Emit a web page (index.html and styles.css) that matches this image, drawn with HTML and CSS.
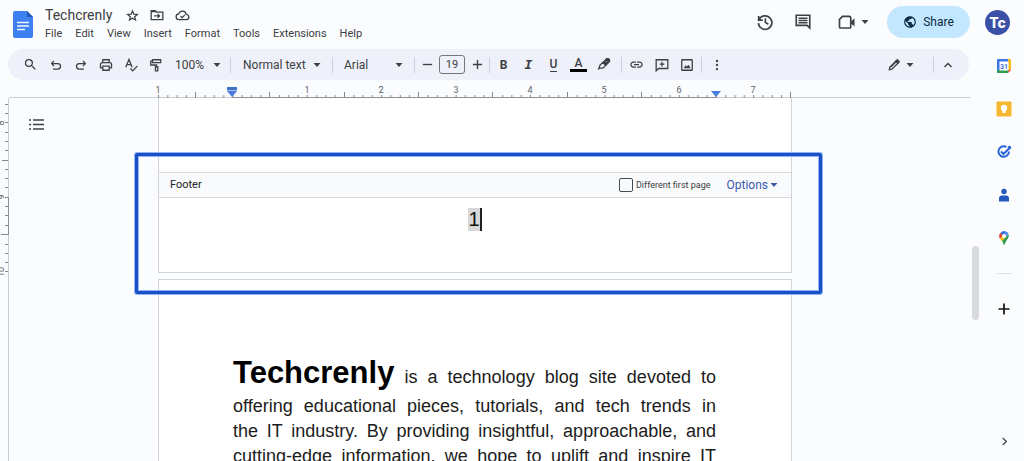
FILE: index.html
```html
<!DOCTYPE html>
<html lang="en">
<head>
<meta charset="utf-8">
<title>Techcrenly</title>
<link rel="stylesheet" href="styles.css">
</head>
<body>
<svg class="defs" aria-hidden="true">
  <symbol id="caret" viewBox="0 0 8 8"><path d="M0.5 2h7L4 6z" fill="currentColor"/></symbol>
</svg>

<header class="header">
  <a class="logo" href="#" aria-label="Docs home">
    <svg width="20" height="27" viewBox="0 0 20 27"><path d="M2 0h12l6 6v19a2 2 0 0 1-2 2H2a2 2 0 0 1-2-2V2a2 2 0 0 1 2-2z" fill="#3d80f2"/><path d="M14 0l6 6h-6z" fill="#2158b8"/><path d="M4 11.500h12M4 15h12M4 18.500h8" stroke="#f4f8ff" stroke-width="1.600"/></svg>
  </a>
  <div class="heading">
    <div class="title-row">
      <h1 class="title">Techcrenly</h1>
      <button class="mini" aria-label="Star"><svg class="line" width="13" height="13" viewBox="0 0 24 24"><path d="M12 3.500l2.500 6 6.500.5-5 4.200 1.600 6.300-5.600-3.400-5.600 3.400L8 14.200 3 10l6.500-.5z"/></svg></button>
      <button class="mini" aria-label="Move"><svg class="line" width="14" height="14" viewBox="0 0 24 24"><path d="M2 4.500h7l2 2.500h11v13H2z"/><path d="M2 6h8M7 13.500h9M13 10l3.500 3.500L13 17"/></svg></button>
      <button class="mini" aria-label="Saved to Drive"><svg class="line" width="15" height="14" viewBox="0 0 24 24"><path d="M6.500 20a5 5 0 0 1-.8-10A6.500 6.500 0 0 1 18.300 11 4.500 4.500 0 0 1 18.500 20z"/><path d="M8.500 14l2.700 2.700 4.800-5"/></svg></button>
    </div>
    <nav class="menu" aria-label="Menu">
      <button>File</button><button>Edit</button><button>View</button><button>Insert</button><button>Format</button><button>Tools</button><button>Extensions</button><button>Help</button>
    </nav>
  </div>
  <div class="actions">
    <button class="action" aria-label="Version history"><svg class="line" width="18" height="18" viewBox="0 0 24 24"><path d="M3.500 4v5.500H9M4 9a9 9 0 1 1-.8 4.500M12.500 7v5.500l4 2.500"/></svg></button>
    <button class="action" aria-label="Comments"><svg class="line" width="18" height="18" viewBox="0 0 24 24"><path d="M3 3h18v17l-3.500-3.500H3z"/><path d="M6 7h12M6 10h12M6 13h12" stroke-width="1.800"/></svg></button>
    <button class="action call" aria-label="Join a call"><svg class="line" width="18" height="18" viewBox="0 0 24 24"><path d="M6 4.500h9a2 2 0 0 1 2 2v12a1.500 1.500 0 0 1-1.500 1.500h-12A1.500 1.500 0 0 1 2 18.500V8.500z"/><path d="M17 11.500l5-4.500v11l-5-4.500z" fill="currentColor" stroke="none"/></svg><svg width="8" height="8"><use href="#caret"/></svg></button>
    <button class="share"><svg width="14" height="14" viewBox="0 0 24 24"><path fill="currentColor" d="M12 2C6.480 2 2 6.480 2 12s4.480 10 10 10 10-4.480 10-10S17.520 2 12 2zm-1 17.930c-3.950-.49-7-3.850-7-7.930 0-.62.08-1.210.21-1.790L9 15v1c0 1.100.9 2 2 2v1.930zm6.900-2.540c-.26-.81-1-1.390-1.900-1.390h-1v-3c0-.55-.45-1-1-1H8v-2h2c.55 0 1-.45 1-1V7h2c1.100 0 2-.9 2-2v-.41c2.930 1.190 5 4.060 5 7.410 0 2.080-.8 3.970-2.100 5.390z"/></svg>Share</button>
    <button class="avatar" aria-label="Account">Tc</button>
  </div>
</header>

<div class="work">
  <main class="editor">
    <div class="toolbar" role="toolbar" aria-label="Formatting">
      <button class="tool" aria-label="Search"><svg width="15" height="15" viewBox="0 0 24 24"><path fill="currentColor" d="M15.500 14h-.79l-.28-.27A6.470 6.470 0 0 0 16 9.500 6.500 6.500 0 1 0 9.500 16c1.610 0 3.090-.59 4.230-1.570l.27.28v.79l5 4.990L20.490 19l-4.990-5zm-6 0C7.010 14 5 11.990 5 9.500S7.010 5 9.500 5 14 7.010 14 9.500 11.990 14 9.500 14z"/></svg></button>
      <button class="tool" aria-label="Undo"><svg class="line" width="14" height="14" viewBox="0 0 24 24"><path d="M8.500 5l-4 4.500 4 4.500M5 9.500h10a4.700 4.700 0 0 1 0 9.500H7"/></svg></button>
      <button class="tool" aria-label="Redo"><svg class="line" width="14" height="14" viewBox="0 0 24 24"><path d="M15.500 5l4 4.500-4 4.500M19 9.500H9a4.700 4.700 0 0 0 0 9.500h8"/></svg></button>
      <button class="tool" aria-label="Print"><svg class="line" width="14" height="14" viewBox="0 0 24 24"><path d="M6.500 8V3h11v5M6.500 17H2.500v-6a3 3 0 0 1 3-3h13a3 3 0 0 1 3 3v6h-4M6.500 14h11v7h-11z"/></svg></button>
      <button class="tool" aria-label="Spelling"><svg class="line" width="14" height="14" viewBox="0 0 24 24"><path d="M3 16L8.500 2.500 14 16M5 11.500h7M11 18l4 4 8-8.500"/></svg></button>
      <button class="tool" aria-label="Paint format"><svg class="line" width="14" height="14" viewBox="0 0 24 24"><path d="M6 3h14v5H6zM6 5.500H3v6.500h10v3M11 15h4v7h-4z"/></svg></button>
      <label class="picker zoom"><select aria-label="Zoom"><option>100%</option></select><svg width="8" height="8"><use href="#caret"/></svg></label>
      <span class="sep"></span>
      <label class="picker style"><select aria-label="Styles"><option>Normal text</option></select><svg width="8" height="8"><use href="#caret"/></svg></label>
      <span class="sep"></span>
      <label class="picker font"><select aria-label="Font"><option>Arial</option></select><svg width="8" height="8"><use href="#caret"/></svg></label>
      <span class="sep"></span>
      <button class="step" aria-label="Decrease font size"><svg class="line" width="11" height="11" viewBox="0 0 24 24"><path d="M2 12h20" stroke-width="3"/></svg></button>
      <input class="size" aria-label="Font size" value="19">
      <button class="step" aria-label="Increase font size"><svg class="line" width="11" height="11" viewBox="0 0 24 24"><path d="M2 12h20M12 2v20" stroke-width="3"/></svg></button>
      <span class="sep"></span>
      <div class="group first-group">
        <button class="tool bold" aria-label="Bold">B</button>
        <button class="tool italic" aria-label="Italic">I</button>
        <button class="tool under" aria-label="Underline"><span>U</span></button>
        <button class="tool color" aria-label="Text color"><span>A</span></button>
        <button class="tool" aria-label="Highlight color"><svg class="line" width="14" height="16" viewBox="0 0 24 27"><path d="M5 14l5-5 5 5-5 5H5l-2 1z"/><path d="M10.500 9l6-6.500h3l2 2v3L15 14z" fill="currentColor"/><path d="M15.500 7l1.500 1.500" stroke="#eef1fa" stroke-width="1.500"/></svg></button>
      </div>
      <span class="sep"></span>
      <div class="group">
        <button class="tool" aria-label="Insert link"><svg width="15" height="15" viewBox="0 0 24 24"><path fill="currentColor" d="M4 12c0-1.710 1.300-3 3-3h4V7H7c-2.760 0-5 2.240-5 5s2.240 5 5 5h4v-2H7c-1.700 0-3-1.300-3-3zM8 13h8v-2H8v2zm9-6h-4v2h4c1.700 0 3 1.300 3 3s-1.300 3-3 3h-4v2h4c2.760 0 5-2.240 5-5s-2.240-5-5-5z"/></svg></button>
        <button class="tool" aria-label="Add comment"><svg class="line" width="14" height="14" viewBox="0 0 24 24"><path d="M2 3h20v15H6l-4 4zM12 6.500v8M8 10.500h8"/></svg></button>
        <button class="tool" aria-label="Insert image"><svg class="line" width="14" height="14" viewBox="0 0 24 24"><rect x="3" y="3" width="18" height="18" rx="1"/><path d="M7 17l3-4 2 2.500 2.500-3.500 3 5z" fill="currentColor" stroke-width="1"/></svg></button>
      </div>
      <span class="sep"></span>
      <div class="group">
        <button class="tool" aria-label="More"><svg width="14" height="14" viewBox="0 0 24 24" fill="currentColor"><circle cx="12" cy="5" r="2"/><circle cx="12" cy="12" r="2"/><circle cx="12" cy="19" r="2"/></svg></button>
      </div>
      <button class="mode" aria-label="Editing mode"><svg class="line" width="14" height="14" viewBox="0 0 24 24"><path d="M4 20l1-4.500L16 4.500 19.500 8 8.500 19z"/><path d="M15 5.500L17.500 3 21 6.500 18.500 9zM6 16L15.500 6.500" fill="currentColor"/></svg><svg width="8" height="8"><use href="#caret"/></svg></button>
      <span class="sep"></span>
      <button class="tool hide" aria-label="Hide the menus"><svg class="line" width="12" height="12" viewBox="0 0 24 24"><path d="M5 16l7-7 7 7" stroke-width="2.800"/></svg></button>
    </div>

    <div class="ruler">
      <svg class="ruler-scale" height="18" aria-label="Horizontal ruler">
        <defs>
          <pattern id="inch" width="74.400" height="18" patternUnits="userSpaceOnUse">
            <path d="M.5 15v3M9.800 15v3M19.100 15v3M28.400 15v3M47 15v3M56.300 15v3M65.600 15v3" stroke="#85888c"/>
          </pattern>
        </defs>
        <rect width="634" height="18" fill="url(#inch)"/>
        <path d="M37.500 12v6M111.500 12v6M186.500 12v6M260.500 12v6M334.500 12v6M409.500 12v6M483.500 12v6M558.500 15v3M632.500 12v6" stroke="#85888c"/>
        <path d="M74 17.500h484" stroke="#8d9094"/>
        <g font-size="9" text-anchor="middle" fill="#5f6368"><text x="0" y="13">1</text><text x="149" y="13">1</text><text x="223" y="13">2</text><text x="298" y="13">3</text><text x="372" y="13">4</text><text x="446" y="13">5</text><text x="521" y="13">6</text><text x="595" y="13">7</text></g>
        <path d="M69 7h10v3H69z" fill="#3f72c9"/><path d="M69 10h10v1H69z" fill="#a9c3f0"/><path d="M69 11h10l-5 6z" fill="#4a7ddb"/><path d="M553 11h10l-5 6z" fill="#4a7ddb"/>
      </svg>
    </div>

    <div class="canvas">
      <svg class="vruler" width="9" height="363" aria-label="Vertical ruler">
        <path d="M8.500 0v363" stroke="#c9ccd0"/><path d="M8.500 99v38" stroke="#8d9094"/>
        <path d="M5 6.500h3M5 15.500h3M5 24.500h3M5 34.500h3M5 43.500h3M5 52.500h3M2 62.500h6M5 71.500h3M5 80.500h3M5 89.500h3M5 99.500h3M5 108.500h3M5 117.500h3M5 127.500h3M1 136.500h7M5 146.500h3M5 155.500h3M5 164.500h3M5 173.500h3" stroke="#85888c"/>
        <g font-size="9" text-anchor="middle" fill="#5f6368"><text transform="translate(4 25) rotate(-90)">8</text><text transform="translate(4 99) rotate(-90)">9</text><text transform="translate(4 174) rotate(-90)">10</text></g>
      </svg>
      <aside class="outline"><button class="mini" aria-label="Show outline"><svg width="15" height="13" viewBox="0 0 15 13"><path d="M0 2h2M4 2h11M0 6.500h2M4 6.500h11M0 11h2M4 11h11" stroke="currentColor" stroke-width="1.600"/></svg></button></aside>
      <div class="pages">
        <section class="page page-end">
          <div class="footer-bar">
            <span class="footer-name">Footer</span>
            <label class="first"><input type="checkbox">Different first page</label>
            <button class="options">Options<svg width="8" height="8"><use href="#caret"/></svg></button>
          </div>
          <p class="footer-text"><span class="field">1</span></p>
        </section>
        <article class="page page-next">
          <p class="body-text"><strong>Techcrenly</strong> is a technology blog site devoted to offering educational pieces, tutorials, and tech trends in<br>the IT industry. By providing insightful, approachable, and cutting-edge information, we hope to uplift and inspire IT</p>
        </article>
        <div class="highlight"></div>
      </div>
    </div>
  </main>

  <div class="scroll"><div class="thumb"></div></div>

  <aside class="rail" aria-label="Side panel">
    <button aria-label="Calendar"><svg width="16" height="16" viewBox="0 0 16 16"><path d="M2 1h11v3H4v11H2a1 1 0 0 1-1-1V2a1 1 0 0 1 1-1z" fill="#3b78e7"/><path d="M12 1h2a1 1 0 0 1 1 1v10h-3z" fill="#f5b921"/><path d="M1 12h11v3H2a1 1 0 0 1-1-1z" fill="#2f9d50"/><path d="M12 12h3l-3 3z" fill="#e5483a"/><path d="M3.500 3.500h9v9h-9z" fill="#fff"/><text x="8" y="10.500" font-size="7" font-weight="700" text-anchor="middle" fill="#3b78e7">31</text></svg></button>
    <button aria-label="Keep"><svg width="16" height="16" viewBox="0 0 16 16"><rect x=".5" y=".5" width="15" height="15" rx="1" fill="#f6b82f"/><circle cx="8" cy="7" r="3.200" fill="#fff"/><path d="M6.500 9h3v3h-3z" fill="#fff"/></svg></button>
    <button aria-label="Tasks"><svg width="16" height="16" viewBox="0 0 16 16" fill="none" stroke="#2b66d9" stroke-width="2"><path d="M10.500 3A5.300 5.300 0 1 0 13 7.500M5 7.500l2.500 2.500L14 3.500"/><circle cx="13.500" cy="3.500" r=".8"/></svg></button>
    <button aria-label="Contacts"><svg width="16" height="16" viewBox="0 0 16 16" fill="#2358bd"><circle cx="8" cy="4.500" r="2.700"/><path d="M3 14.500v-3a3 3 0 0 1 3-3h4a3 3 0 0 1 3 3v3z"/></svg></button>
    <button aria-label="Maps"><svg width="16" height="16" viewBox="0 0 16 16"><path d="M8 7L4.400 3A4.900 4.900 0 0 1 9.500 1.300z" fill="#3271d8"/><path d="M9.500 1.300A5 5 0 0 1 12.500 4L8 8z" fill="#4e8cf0"/><path d="M4.400 3A5 5 0 0 0 3.700 8.500L8 6z" fill="#dd4437"/><path d="M3.700 8.500L6 11.500 10 7 7 5.500z" fill="#f6b921"/><path d="M12.500 4c1.400 4-2.500 5.500-3.700 10.500H7.500C7.300 13 6.700 12 6 11.300z" fill="#2f9d50"/><circle cx="8" cy="6" r="1.900" fill="#fff"/></svg></button>
    <hr>
    <button aria-label="Get add-ons"><svg width="16" height="16" viewBox="0 0 16 16"><path d="M2.500 8h11M8 2.500v11" stroke="#111" stroke-width="1.700"/></svg></button>
    <button class="collapse" aria-label="Hide side panel"><svg class="line" width="11" height="11" viewBox="0 0 24 24"><path d="M8 4l8 8-8 8" stroke-width="2.800"/></svg></button>
  </aside>
</div>
</body>
</html>
```

FILE: styles.css
```css
* { box-sizing: border-box; }

body {
  margin: 0;
  height: 100vh;
  display: flex;
  flex-direction: column;
  overflow: hidden;
  background: #fbfcfe;
  color: #3c4043;
  font: 12px/16px Roboto, "Liberation Sans", sans-serif;
}

button, select, input { font: inherit; color: inherit; }

button {
  display: flex;
  align-items: center;
  justify-content: center;
  padding: 0;
  border: 0;
  background: none;
  cursor: pointer;
}

svg { display: block; flex: none; }
.defs { position: absolute; width: 0; height: 0; }
.line { fill: none; stroke: currentColor; stroke-width: 2.2; }

/* Header */
.header {
  flex: none;
  display: flex;
  align-items: flex-start;
  height: 49px;
  padding: 6px 14px 0 13px;
}
.logo { margin-top: 5px; }
.heading { margin-left: 12px; }
.title-row { display: flex; align-items: center; gap: 11px; height: 18px; }
.title { margin: 0 3px 0 0; font-size: 14px; font-weight: 400; line-height: 18px; }
.menu { display: flex; gap: 13px; height: 20px; font-size: 11px; }
.menu button { line-height: 20px; }
.actions { display: flex; align-items: center; height: 32px; margin-left: auto; }
.action { width: 38px; height: 32px; }
.call { width: 56px; gap: 5px; margin-right: 9px; padding-left: 6px; }
.share {
  gap: 6px;
  width: 83px;
  height: 32px;
  margin-right: 15px;
  border-radius: 16px;
  background: #c2e7ff;
  color: #0b2a42;
  font-size: 12px;
}
.avatar {
  width: 25px;
  height: 25px;
  border-radius: 50%;
  background: #3a4fa6;
  color: #fff;
  font: 800 14px/25px Inter, sans-serif;
}

/* Work area */
.work { flex: 1; display: flex; min-height: 0; }
.editor { flex: 1; display: flex; flex-direction: column; min-width: 0; }

.toolbar {
  flex: none;
  display: flex;
  align-items: center;
  height: 31px;
  margin: 0 1px 0 8px;
  padding: 0 7px 0 10px;
  border-radius: 16px;
  background: #eef1fa;
}
.tool { width: 25px; height: 24px; }
.step { width: 24px; height: 24px; }
.sep { width: 1px; height: 16px; background: #cdd1d9; }
.group { display: flex; padding: 0 2px; }
.first-group { padding: 0 5px 0 1px; }
.picker { display: grid; align-items: center; }
.picker > * { grid-area: 1 / 1; }
.picker select {
  width: 100%;
  padding: 0;
  border: 0;
  background: none;
  appearance: none;
}
.picker svg { justify-self: end; pointer-events: none; }
.zoom { width: 62px; padding: 0 9px 0 7px; }
.style { width: 101px; padding: 0 11px 0 12px; }
.font { width: 81px; padding: 0 11px; }
.size {
  width: 26px;
  height: 19px;
  padding: 0;
  border: 1px solid #74777a;
  border-radius: 3px;
  background: none;
  text-align: center;
  font-size: 11px;
}
.bold { font-weight: 700; }
.italic { font: italic 700 13px/16px "DejaVu Sans Mono", monospace; }
.under { font-weight: 500; }
.under span { line-height: 13px; border-bottom: 1px solid #3c4043; }
.color { font-weight: 500; }
.color span { width: 17px; line-height: 12px; border-bottom: 3px solid #000; }
.mode { gap: 5px; height: 24px; margin: 0 19px 0 auto; }
.hide { width: 28px; }

/* Rulers and pages share one set of columns */
.ruler, .canvas {
  display: grid;
  grid-template-columns: 9px 149fr minmax(0, 634px) 178fr;
}
.ruler {
  flex: none;
  height: 18px;
  background: linear-gradient(#c9ccd0, #c9ccd0) 9px 17px / 100% 1px no-repeat;
}
.ruler-scale { grid-column: 3; width: 100%; overflow: visible; }
.canvas { flex: 1; min-height: 0; }
.outline { padding: 20px 0 0 20px; }
.pages { position: relative; }

.page { border: 1px solid #d3d5d8; background: #fff; }
.page-end { border-top: 0; padding-top: 74px; }
.page-next { height: 200px; margin-top: 6px; padding: 71px 75px 0 74px; }
.footer-bar {
  display: flex;
  align-items: center;
  height: 26px;
  padding: 0 13px 0 11px;
  border: solid #dadce0;
  border-width: 1px 0;
  background: #f9fafb;
}
.footer-name { color: #202124; font-size: 11px; }
.first {
  display: flex;
  align-items: center;
  gap: 3px;
  margin-left: auto;
  font-size: 9px;
}
.first input {
  width: 14px;
  height: 14px;
  margin: 0;
  appearance: none;
  border: 1px solid #4a4d50;
  border-radius: 2px;
}
.options { gap: 2px; margin-left: 16px; color: #3c57ae; }
.footer-text {
  height: 74px;
  margin: 0;
  padding-top: 10px;
  text-align: center;
  color: #111;
  font: 20px/23px "Liberation Sans", Arial, sans-serif;
}
.field { display: inline-block; background: #d8d8d8; border-right: 2px solid #222; }
.body-text {
  margin: 0;
  color: #1c1c1c;
  font: 18px/25px "Liberation Sans", Arial, sans-serif;
  text-align: justify;
  text-align-last: justify;
}
.body-text strong { font-size: 31px; line-height: 43px; color: #000; }

.highlight {
  position: absolute;
  top: 55px;
  left: -23px;
  right: -30px;
  height: 141px;
  border: 3px solid #1b50c6;
  border-radius: 2px;
  box-shadow: 0 0 0 1px #8fb4f7, inset 0 0 0 1px #8fb4f7;
  pointer-events: none;
}

/* Scrollbar and side panel */
.scroll { width: 14px; padding: 197px 5px 0 2px; }
.thumb { height: 74px; border-radius: 4px; background: #d9dadc; }
.rail {
  display: flex;
  flex-direction: column;
  align-items: center;
  gap: 27px;
  width: 40px;
  padding: 9px 0 14px;
}
.rail hr { width: 15px; height: 1px; margin: 0; border: 0; background: #dfe1e4; }
.collapse { margin-top: auto; }
```
